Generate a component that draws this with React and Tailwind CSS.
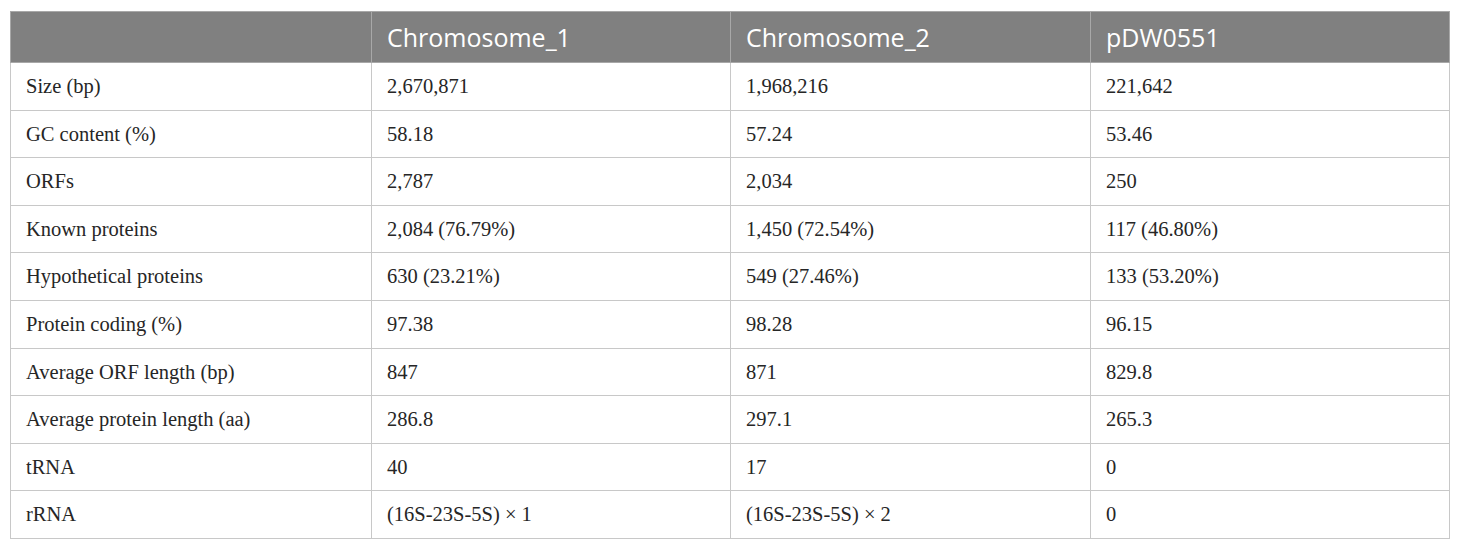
import React from "react";

const headers = ["", "Chromosome_1", "Chromosome_2", "pDW0551"];

const rows = [
    ["Size (bp)", "2,670,871", "1,968,216", "221,642"],
    ["GC content (%)", "58.18", "57.24", "53.46"],
    ["ORFs", "2,787", "2,034", "250"],
    ["Known proteins", "2,084 (76.79%)", "1,450 (72.54%)", "117 (46.80%)"],
    ["Hypothetical proteins", "630 (23.21%)", "549 (27.46%)", "133 (53.20%)"],
    ["Protein coding (%)", "97.38", "98.28", "96.15"],
    ["Average ORF length (bp)", "847", "871", "829.8"],
    ["Average protein length (aa)", "286.8", "297.1", "265.3"],
    ["tRNA", "40", "17", "0"],
    ["rRNA", "(16S-23S-5S) × 1", "(16S-23S-5S) × 2", "0"],
];

const widths = ["w-[361px]", "w-[359px]", "w-[360px]", "w-[359px]"];

const App = () => {
    return (
        <div className="w-[1460px] h-[550px] bg-white pt-[11px] pl-[10px]">
            <table className="w-[1439px] border-collapse table-fixed">
                <thead>
                    <tr className="h-[51px] bg-[#808080]">
                        {headers.map((h, i) => (
                            <th
                                key={i}
                                className={`${widths[i]} border border-[#a8a8a8] px-[15px] text-left font-normal text-white text-[25px] font-['Open_Sans',sans-serif] leading-none`}
                            >
                                {h}
                            </th>
                        ))}
                    </tr>
                </thead>
                <tbody>
                    {rows.map((row, r) => (
                        <tr key={r} className="h-[47.6px]">
                            {row.map((cell, c) => (
                                <td
                                    key={c}
                                    className="border border-[#c8c8c8] px-[15px] text-[20.5px] text-[#262626] font-['Liberation_Serif',serif] leading-none"
                                >
                                    {cell}
                                </td>
                            ))}
                        </tr>
                    ))}
                </tbody>
            </table>
        </div>
    );
};

export default App;
